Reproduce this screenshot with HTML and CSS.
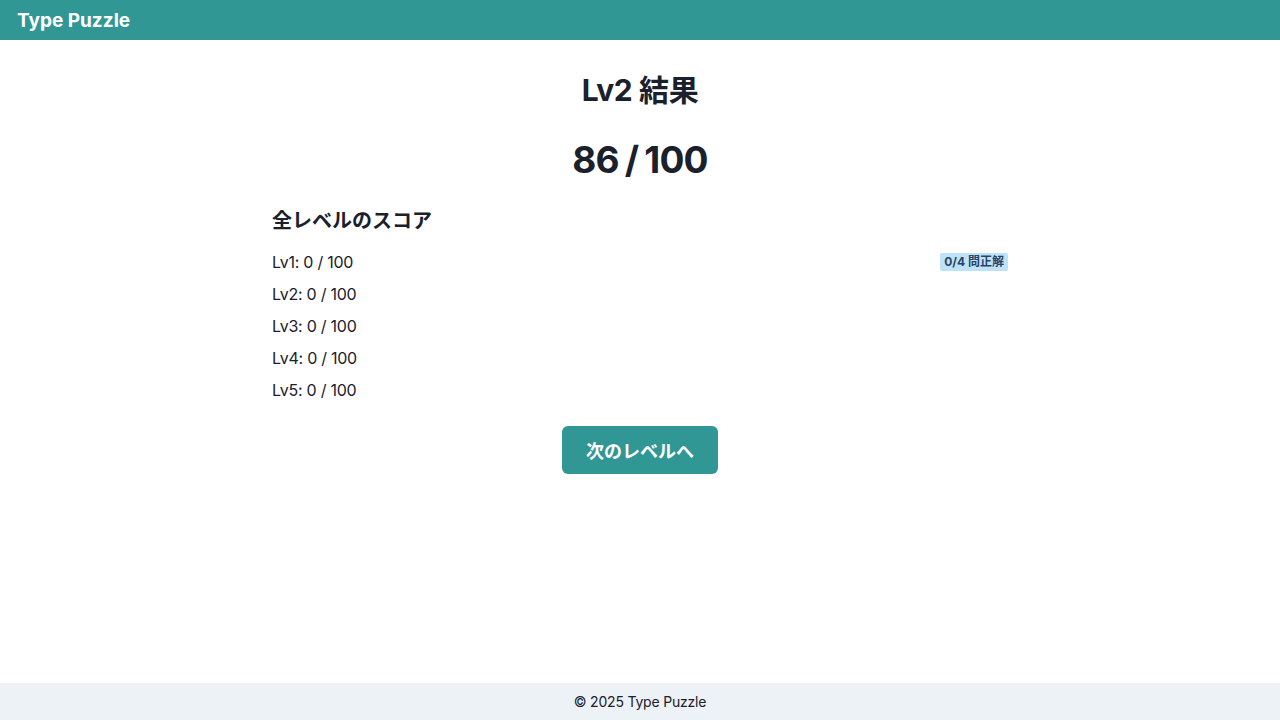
FILE: index.html
```html
<!DOCTYPE html>
<html lang="ja">
<head>
<meta charset="utf-8">
<title>Type Puzzle</title>
<link rel="stylesheet" href="styles.css">
</head>
<body>
<div class="page">
  <header class="topbar">
    <span class="brand">Type Puzzle</span>
  </header>
  <main class="main">
    <div class="container">
      <h1 class="title">Lv2 結果</h1>
      <div class="score">86 / 100</div>
      <h2 class="subtitle">全レベルのスコア</h2>
      <ul class="levels">
        <li class="level"><span>Lv1: 0 / 100</span><span class="badge">0/4 問正解</span></li>
        <li class="level"><span>Lv2: 0 / 100</span></li>
        <li class="level"><span>Lv3: 0 / 100</span></li>
        <li class="level"><span>Lv4: 0 / 100</span></li>
        <li class="level"><span>Lv5: 0 / 100</span></li>
      </ul>
      <div class="actions">
        <button class="next-btn" type="button">次のレベルへ</button>
      </div>
    </div>
  </main>
  <footer class="footer">© 2025 Type Puzzle</footer>
</div>
</body>
</html>
```

FILE: styles.css
```css
* { box-sizing: border-box; }
html, body {
  margin: 0;
  padding: 0;
  height: 100%;
}
body {
  font-family: Inter, "Noto Sans CJK JP", sans-serif;
  color: #1A202C;
  background: #ffffff;
}
.page {
  min-height: 100vh;
  display: flex;
  flex-direction: column;
}
.topbar {
  height: 40px;
  background: #319795;
  display: flex;
  align-items: center;
  padding: 0 17px;
}
.brand {
  color: #ffffff;
  font-weight: 700;
  font-size: 19px;
}
.main {
  flex: 1;
}
.container {
  width: 736px;
  margin: 0 auto;
  padding-top: 32px;
  display: flex;
  flex-direction: column;
}
.title {
  margin: 0;
  text-align: center;
  font-size: 30px;
  line-height: 36px;
  font-weight: 700;
  letter-spacing: -0.4px;
}
.score {
  margin-top: 28px;
  text-align: center;
  font-size: 37px;
  line-height: 48px;
  font-weight: 700;
  letter-spacing: -0.8px;
  word-spacing: -2px;
}
.subtitle {
  margin: 25px 0 0;
  font-size: 20px;
  line-height: 24px;
  font-weight: 700;
}
.levels {
  list-style: none;
  margin: 17px 0 0;
  padding: 0;
  display: flex;
  flex-direction: column;
  gap: 8px;
}
.level {
  display: flex;
  justify-content: space-between;
  align-items: center;
  font-size: 16px;
  line-height: 24px;
  letter-spacing: -0.25px;
}
.badge {
  background: #BEE3F8;
  color: #2A4365;
  font-size: 12px;
  font-weight: 700;
  line-height: 18px;
  padding: 0 4px;
  border-radius: 2px;
  letter-spacing: 0;
}
.actions {
  margin-top: 24px;
  display: flex;
  justify-content: center;
}
.next-btn {
  height: 48px;
  padding: 0 24px;
  border: none;
  border-radius: 6px;
  background: #319795;
  color: #ffffff;
  font-family: Inter, "Noto Sans CJK JP", sans-serif;
  font-size: 18px;
  font-weight: 700;
  cursor: pointer;
}
.footer {
  background: #EDF2F7;
  text-align: center;
  font-size: 14px;
  line-height: 21px;
  padding: 8px 0;
  letter-spacing: -0.2px;
}
```
